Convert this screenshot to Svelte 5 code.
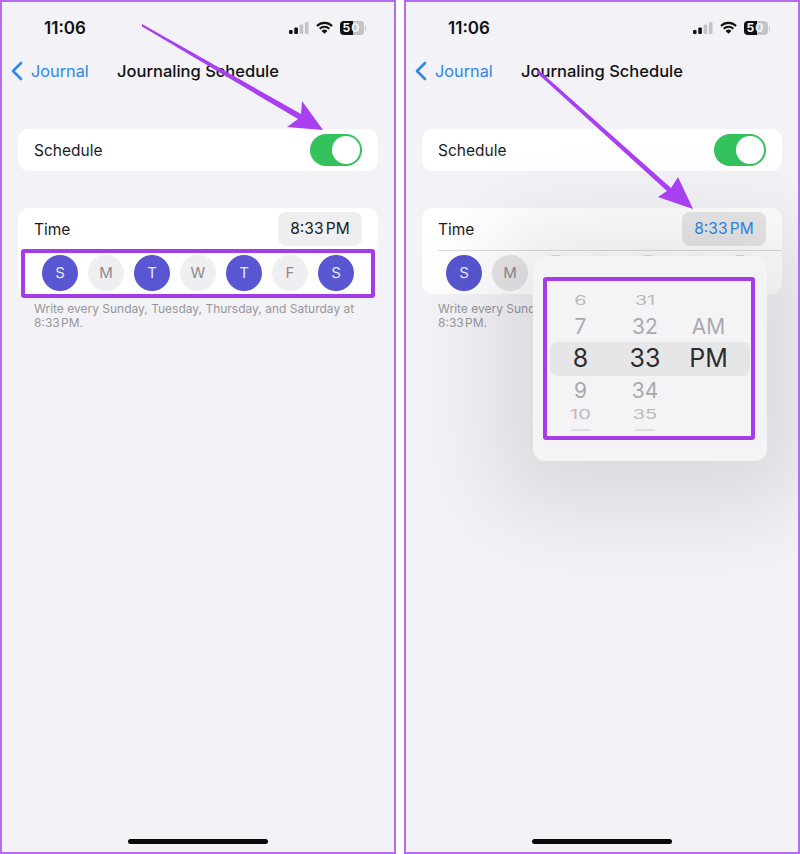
<script>
  const days = [
    { label: 'S', on: true },
    { label: 'M', on: false },
    { label: 'T', on: true },
    { label: 'W', on: false },
    { label: 'T', on: true },
    { label: 'F', on: false },
    { label: 'S', on: true }
  ];

  const hours = [
    { v: '6', c: 'far first' },
    { v: '7', c: 'near' },
    { v: '8', c: 'sel' },
    { v: '9', c: 'near' },
    { v: '10', c: 'far last' }
  ];
  const mins = [
    { v: '31', c: 'far first' },
    { v: '32', c: 'near' },
    { v: '33', c: 'sel' },
    { v: '34', c: 'near' },
    { v: '35', c: 'far last' }
  ];
  const ampm = [
    { v: '', c: 'far' },
    { v: 'AM', c: 'near' },
    { v: 'PM', c: 'sel' }
  ];
</script>

{#snippet top()}
  <div class="status">
    <span class="clock">11:06</span>
    <div class="status-icons">
      <svg width="20" height="14" viewBox="0 0 20 14">
        <rect x="0" y="9" width="3.6" height="4" rx="1" fill="#111" />
        <rect x="5.3" y="6.5" width="3.6" height="6.5" rx="1" fill="#111" />
        <rect x="10.6" y="3.5" width="3.6" height="9.5" rx="1" fill="#c4c4c8" />
        <rect x="15.9" y="1" width="3.6" height="12" rx="1" fill="#c4c4c8" />
      </svg>
      <svg width="17" height="14" viewBox="0 0 18 14">
        <path d="M1 4.8 A11.5 11.5 0 0 1 17 4.8" fill="none" stroke="#111" stroke-width="2.2" />
        <path d="M3.9 7.8 A7.4 7.4 0 0 1 14.1 7.8" fill="none" stroke="#111" stroke-width="2.2" />
        <path d="M9 13.2 L5.9 10.2 A4.4 4.4 0 0 1 12.1 10.2 Z" fill="#111" />
      </svg>
      <div class="battery-wrap">
        <div class="battery">
          <div class="level"></div>
          <span>50</span>
        </div>
        <div class="tip"></div>
      </div>
    </div>
  </div>
  <div class="nav">
    <svg class="chev" width="13" height="20" viewBox="0 0 13 20">
      <path d="M11 2 L3 10 L11 18" fill="none" stroke="#2f87e6" stroke-width="2.6" stroke-linecap="round" stroke-linejoin="round" />
    </svg>
    <span class="back">Journal</span>
    <span class="title">Journaling Schedule</span>
  </div>
  <div class="card schedule">
    <span>Schedule</span>
    <div class="toggle"><div class="knob"></div></div>
  </div>
{/snippet}

{#snippet column(items, tail)}
  <div class="col">
    {#each items as it}
      <div class="cell {it.c}">{it.v}</div>
    {/each}
    {#if tail}
      <div class="tail"></div>
    {/if}
  </div>
{/snippet}

<div class="page">
  <section class="phone">
    {@render top()}
    <div class="card timecard">
      <div class="time-row">
        <span>Time</span>
        <div class="time-btn">8:33 PM</div>
      </div>
      <div class="days">
        {#each days as d}
          <div class="day" class:on={d.on}>{d.label}</div>
        {/each}
      </div>
    </div>
    <p class="note">Write every Sunday, Tuesday, Thursday, and Saturday at<br /><span class="tight">8:33 PM.</span></p>
    <div class="home"></div>

    <div class="mark days-mark"></div>
    <svg class="arrow" viewBox="0 0 396 854">
      <polygon points="142,24 301,114 302,101 323,130 287,127 298,119 142,26.5" fill="#a83ff0" />
    </svg>
  </section>

  <section class="phone right">
    {@render top()}
    <div class="card timecard open">
      <div class="time-row">
        <span>Time</span>
        <div class="time-btn">8:33 PM</div>
      </div>
      <div class="days">
        {#each days as d}
          <div class="day" class:on={d.on}>{d.label}</div>
        {/each}
      </div>
    </div>
    <p class="note">Write every Sunday, Tuesday, Thursday, and Saturday at<br /><span class="tight">8:33 PM.</span></p>
    <div class="home"></div>

    <div class="popover">
      <div class="band"></div>
      <div class="wheels">
        {@render column(hours, true)}
        {@render column(mins, true)}
        {@render column(ampm, false)}
      </div>
    </div>
    <div class="mark picker-mark"></div>
    <svg class="arrow" viewBox="0 0 396 854">
      <polygon points="133,71.5 135,70.5 267,188 274,177 289,209 254,197 263,191 133,73" fill="#a83ff0" />
    </svg>
  </section>
</div>

<style>
  :global(body) {
    margin: 0;
    background: #fff;
  }

  .page {
    display: flex;
    justify-content: space-between;
    width: 800px;
    height: 854px;
    font-family: Inter, "Liberation Sans", sans-serif;
    color: #1c1c1e;
  }

  .phone {
    position: relative;
    box-sizing: border-box;
    width: 396px;
    height: 854px;
    padding: 0 16px;
    overflow: hidden;
    background: #f2f2f7;
    border: 2px solid #b76cf0;
  }

  .status {
    display: flex;
    align-items: center;
    justify-content: space-between;
    height: 28px;
    margin-top: 12px;
    padding: 0 12px 0 26px;
  }

  .clock {
    font-size: 17px;
    font-weight: 600;
    color: #111;
  }

  .status-icons {
    display: flex;
    align-items: center;
    gap: 7px;
  }

  .battery-wrap {
    display: flex;
    align-items: center;
    gap: 1px;
  }

  .battery {
    position: relative;
    width: 24px;
    height: 14px;
    border-radius: 4px;
    background: #c4c4c8;
    overflow: hidden;
    font-size: 12px;
    font-weight: 700;
    line-height: 14px;
    letter-spacing: 1px;
    text-align: center;
    color: #f4f4f4;
  }

  .battery span {
    position: relative;
  }

  .level {
    position: absolute;
    left: 0;
    top: 0;
    bottom: 0;
    width: 13px;
    background: #111;
  }

  .tip {
    width: 1.5px;
    height: 5px;
    border-radius: 0 2px 2px 0;
    background: #c4c4c8;
  }

  .nav {
    display: flex;
    align-items: center;
    height: 30px;
    margin-top: 14px;
    margin-left: -8px;
    font-size: 16.3px;
  }

  .chev {
    margin-right: 8px;
  }

  .back {
    width: 86px;
    color: #2f87e6;
  }

  .title {
    font-weight: 500;
    font-size: 16.5px;
    white-space: nowrap;
    color: #111;
  }

  .card {
    background: #fff;
    border-radius: 11px;
    font-size: 15.5px;
  }

  .schedule {
    display: flex;
    align-items: center;
    justify-content: space-between;
    height: 42px;
    margin-top: 43px;
    padding: 0 16px;
  }

  .toggle {
    display: flex;
    justify-content: flex-end;
    align-items: center;
    width: 52px;
    height: 32px;
    padding: 2px;
    box-sizing: border-box;
    border-radius: 16px;
    background: #34c25c;
  }

  .knob {
    width: 28px;
    height: 28px;
    border-radius: 50%;
    background: #fff;
  }

  .timecard {
    height: 86px;
    margin-top: 37px;
    padding: 4px 16px 0;
    box-sizing: border-box;
  }

  .time-row {
    display: flex;
    align-items: center;
    justify-content: space-between;
    height: 34px;
  }

  .time-btn {
    width: 84px;
    height: 34px;
    border-radius: 8px;
    background: #efeff1;
    font-size: 15.5px;
    line-height: 34px;
    text-align: center;
    word-spacing: -2px;
    color: #1c1c1e;
  }

  .days {
    display: flex;
    gap: 10px;
    margin-top: 9px;
    margin-left: 8px;
  }

  .day {
    width: 36px;
    height: 36px;
    border-radius: 50%;
    background: #efeff1;
    color: #8a8a8e;
    font-size: 15px;
    line-height: 36px;
    text-align: center;
  }

  .day.on {
    background: #5856d0;
    color: #e8e8f8;
  }

  .open .time-row {
    padding-bottom: 4px;
    border-bottom: 1px solid #dcdcde;
    margin-right: -16px;
    padding-right: 16px;
  }

  .open .time-btn {
    background: #e8e8ea;
    color: #2f87e6;
  }

  .open .days {
    margin-top: 4px;
  }

  .open .day:not(.on) {
    background: #e6e6e8;
  }

  .open .day:nth-child(n + 3) {
    opacity: 0.25;
  }

  .note {
    margin: 8px 0 0 16px;
    font-size: 12px;
    line-height: 14px;
    color: #97979b;
  }

  .tight {
    word-spacing: -2px;
  }

  .home {
    position: absolute;
    left: 126px;
    bottom: 8px;
    width: 140px;
    height: 5px;
    border-radius: 3px;
    background: #0a0a0a;
  }

  /* annotations and the popover lie over the screen */
  .mark {
    position: absolute;
    box-sizing: border-box;
    border: 4px solid #a63be8;
    border-radius: 3px;
  }

  .days-mark {
    left: 19px;
    top: 247px;
    width: 354px;
    height: 49px;
  }

  .picker-mark {
    left: 137px;
    top: 275px;
    width: 212px;
    height: 163px;
  }

  .arrow {
    position: absolute;
    left: -2px;
    top: -2px;
    width: 396px;
    height: 854px;
    pointer-events: none;
  }

  .popover {
    position: absolute;
    left: 127px;
    top: 254px;
    width: 234px;
    height: 205px;
    border-radius: 12px;
    background: #f4f4f7;
    box-shadow: 0 10px 90px 40px rgba(0, 0, 0, 0.1);
  }

  .band {
    position: absolute;
    left: 17px;
    right: 17px;
    top: 86px;
    height: 34px;
    border-radius: 7px;
    background: #e6e6e8;
  }

  .wheels {
    position: relative;
    display: grid;
    grid-template-columns: 65px 64px 63px;
    margin-left: 15px;
    padding-top: 31px;
  }

  .cell {
    display: flex;
    align-items: center;
    justify-content: center;
    height: 30px;
    color: #a9a9ad;
    font-size: 21px;
    line-height: 1;
  }

  .cell.far {
    height: 24px;
    color: #b9b9bd;
    font-size: 20px;
    transform: scaleY(0.62);
  }

  .cell.far.first {
    transform: translateY(2px) scaleY(0.62);
  }

  .cell.far.last {
    transform: translateY(-2px) scaleY(0.62);
  }

  .cell.sel {
    height: 34px;
    color: #2c2c2e;
    font-size: 25px;
  }

  .tail {
    width: 20px;
    height: 2px;
    margin: 0 auto;
    border-radius: 1px;
    background: #dedee2;
  }
</style>
